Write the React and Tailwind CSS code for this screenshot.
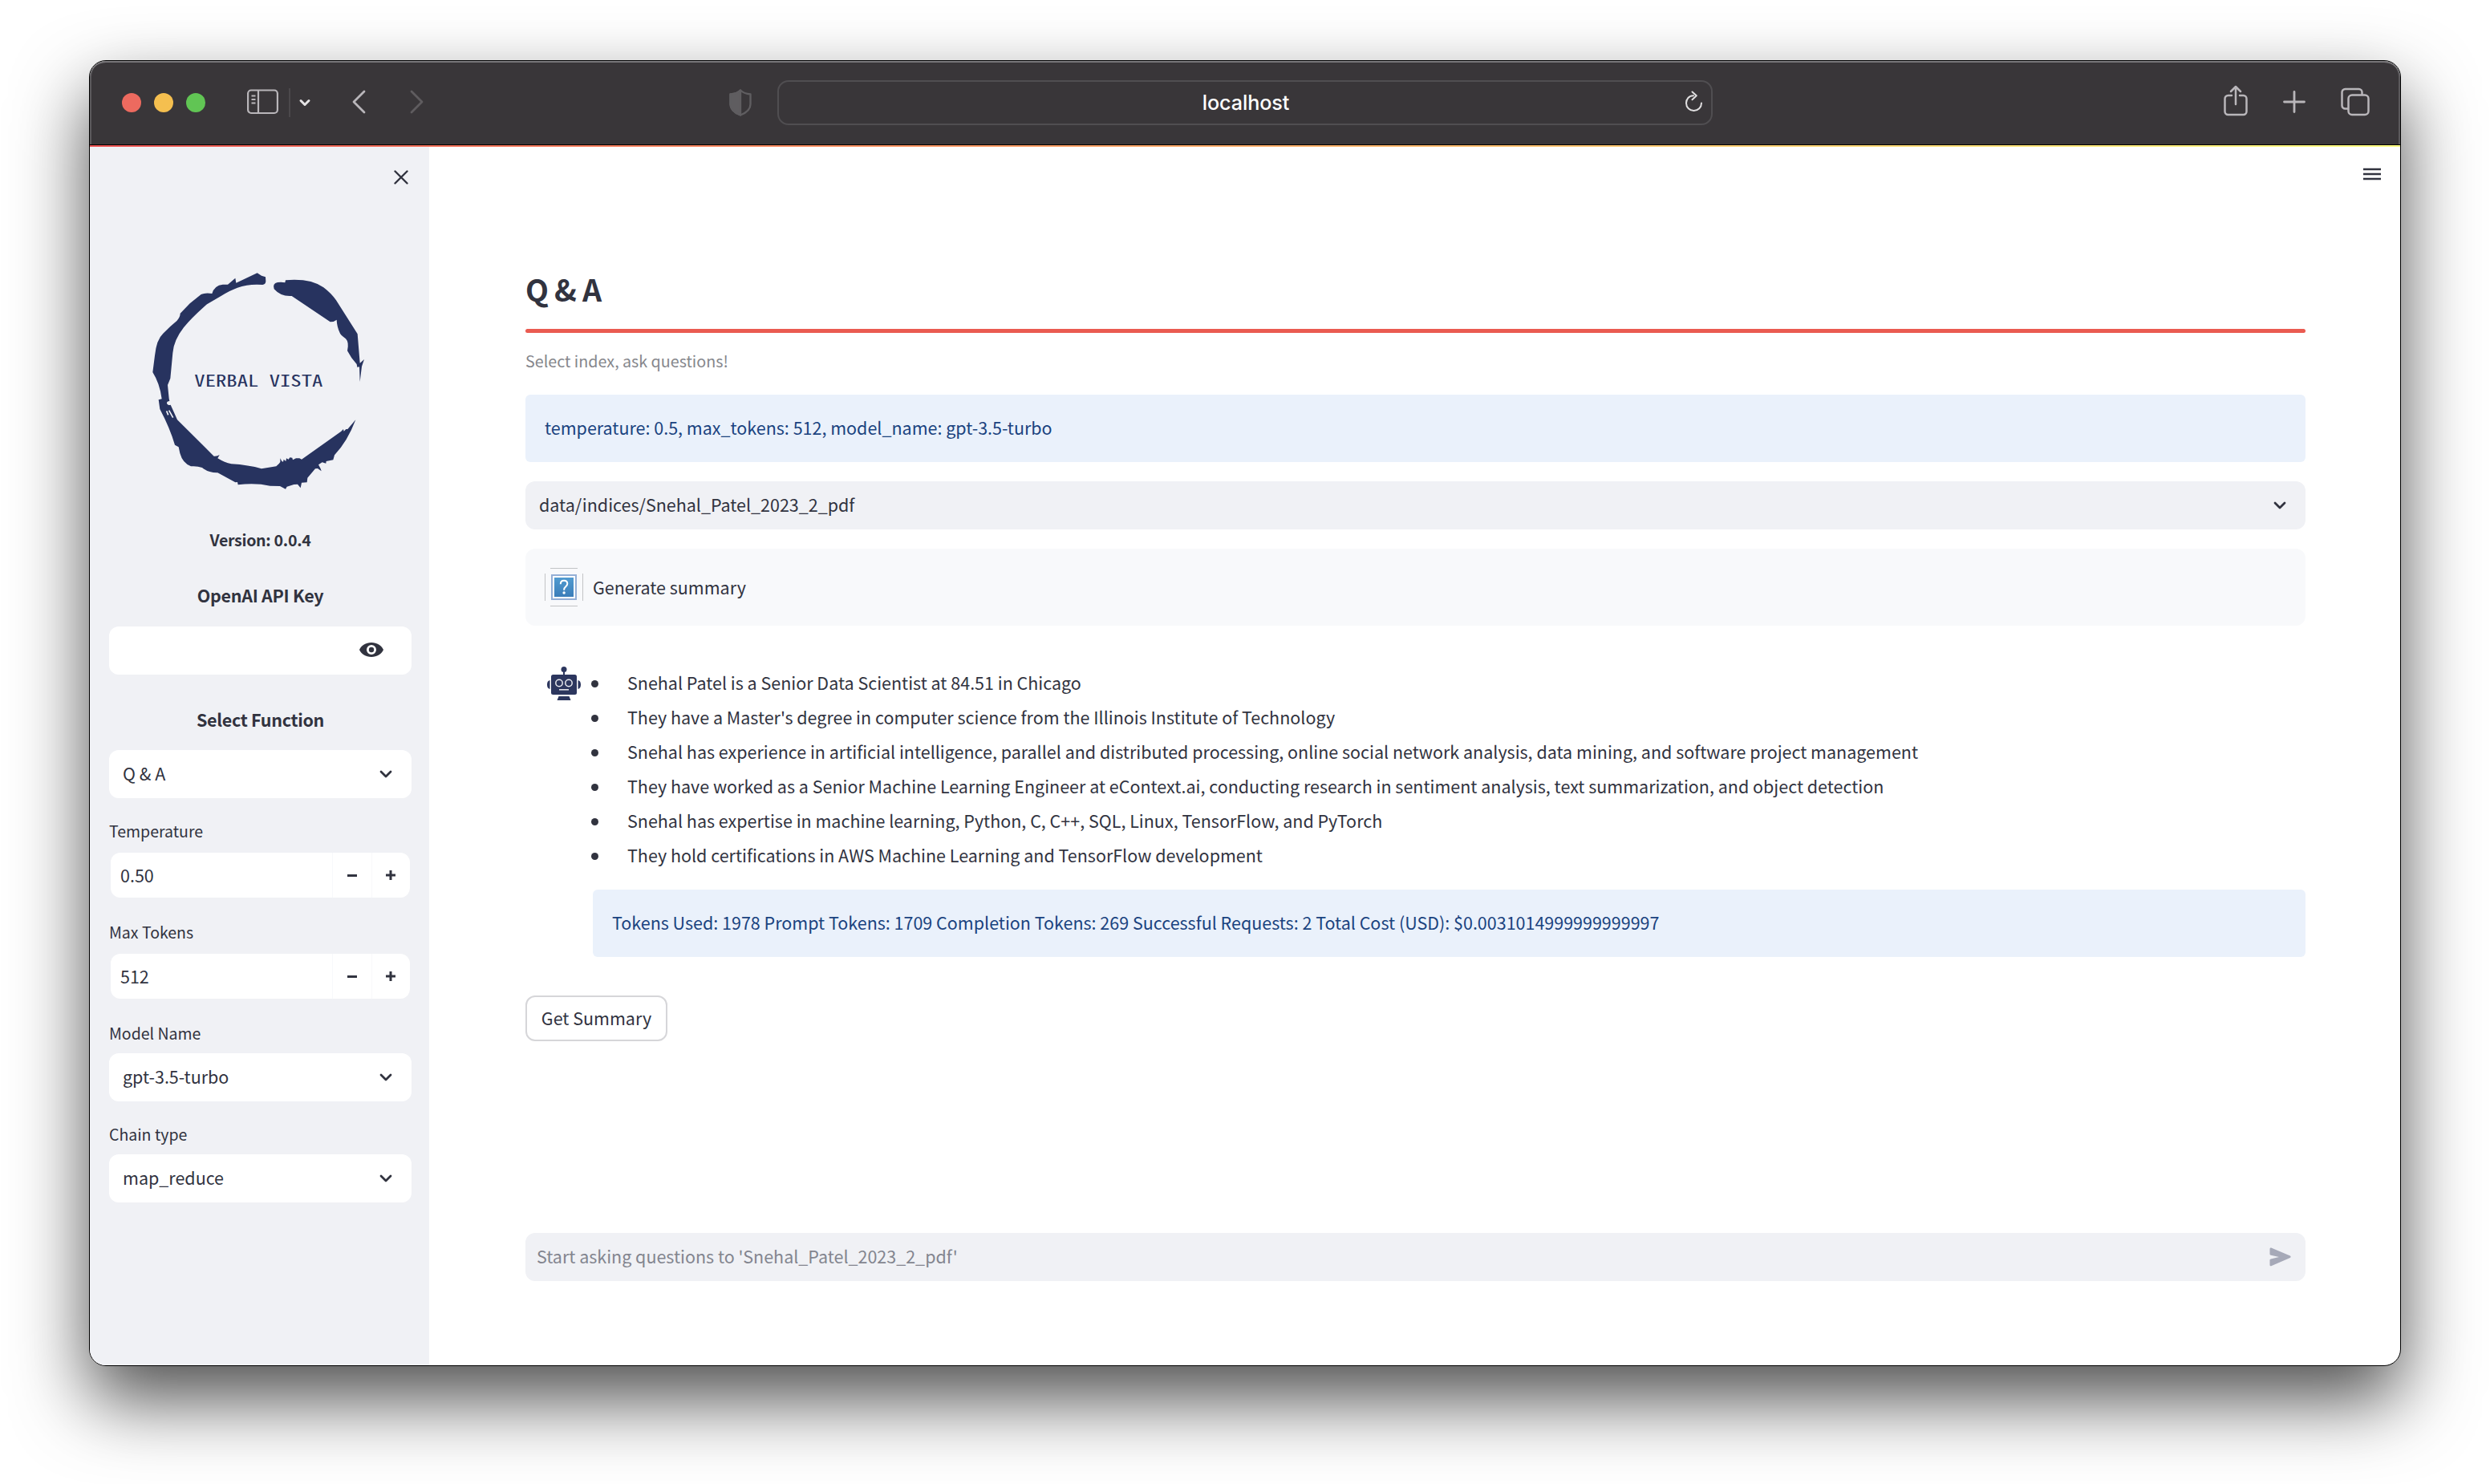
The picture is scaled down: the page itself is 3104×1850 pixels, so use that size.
import React from "react";

const bullets = [
  "Snehal Patel is a Senior Data Scientist at 84.51 in Chicago",
  "They have a Master's degree in computer science from the Illinois Institute of Technology",
  "Snehal has experience in artificial intelligence, parallel and distributed processing, online social network analysis, data mining, and software project management",
  "They have worked as a Senior Machine Learning Engineer at eContext.ai, conducting research in sentiment analysis, text summarization, and object detection",
  "Snehal has expertise in machine learning, Python, C, C++, SQL, Linux, TensorFlow, and PyTorch",
  "They hold certifications in AWS Machine Learning and TensorFlow development",
];

function Chevron({ className }) {
  return (
    <svg className={className} width="16" height="10" viewBox="0 0 16 10" fill="none" stroke="currentColor" strokeWidth="2.8" strokeLinecap="round" strokeLinejoin="round">
      <path d="M2 2l6 6 6-6" />
    </svg>
  );
}

function Toolbar() {
  return (
    <header className="flex h-[104px] shrink-0 items-center text-[#b9b6ba] bg-[#393639] shadow-[inset_0_2px_0_#79777a,inset_2px_0_0_#5c5a5d,inset_-2px_0_0_#5c5a5d] rounded-t-[20px]">
      <div className="ml-10 flex gap-4">
        <span className="size-6 rounded-full bg-[#ed6a5f]" />
        <span className="size-6 rounded-full bg-[#f5bf4f]" />
        <span className="size-6 rounded-full bg-[#61c554]" />
      </div>
      <svg className="ml-[52px]" width="39" height="48" fill="none" stroke="currentColor" strokeWidth="2.2">
        <rect x="1.100" y="8.500" width="36.800" height="28.500" rx="4" />
        <path d="M14 9v28M5.500 15.500h5M5.500 20h5M5.500 24.500h5" />
      </svg>
      <span className="ml-[13px] h-9 w-0.5 bg-[#4b484b]" />
      <svg className="ml-[10px] text-[#e4e3e4]" width="16" height="48" fill="none" stroke="currentColor" strokeWidth="3" strokeLinecap="round" strokeLinejoin="round">
        <path d="M3 21.500l5 5 5-5" />
      </svg>
      <svg className="ml-[50px]" width="20" height="48" fill="none" stroke="currentColor" strokeWidth="2.8" strokeLinecap="round" strokeLinejoin="round">
        <path d="M16 10L3 23l13 13" />
      </svg>
      <svg className="ml-[52px] text-[#5f5c5f]" width="20" height="48" fill="none" stroke="currentColor" strokeWidth="2.8" strokeLinecap="round" strokeLinejoin="round">
        <path d="M3 10l13 13L3 36" />
      </svg>
      <svg className="ml-[379px] text-[#5f5d60]" width="28" height="48" fill="none" stroke="currentColor" strokeWidth="2.400" strokeLinejoin="round">
        <path d="M14 8.500c3 3 7 4.500 12.500 5V26c0 6-5 10.500-12.500 13.500C6.500 36.500 1.500 32 1.500 26V13.500C7 13 11 11.500 14 8.500z" />
        <path d="M14 8.500V39.500C6.500 36.500 1.500 32 1.500 26V13.500C7 13 11 11.500 14 8.500z" fill="currentColor" />
      </svg>
      <div className="ml-8 flex h-14 w-[1166px] items-center justify-end rounded-[14px] border-2 border-[#504e51] pr-[9px]">
        <span className="flex-1 pl-[35px] text-center font-['Inter',sans-serif] text-[25.2px] font-medium tracking-[-0.1px] text-white">localhost</span>
        <svg className="text-[#e0dfe0]" width="24" height="48" fill="none" stroke="currentColor" strokeWidth="2" strokeLinecap="round" strokeLinejoin="round">
          <path d="M11 15.200C5.500 15.200 2 19.500 2 24.600 2 29.900 6.200 34 11.500 34S21 29.900 21 24.600M9.500 10.500l5.300 4.800-5.300 5" />
        </svg>
      </div>
      <svg className="ml-[637px]" width="30" height="48" fill="none" stroke="currentColor" strokeWidth="2.500" strokeLinecap="round" strokeLinejoin="round">
        <path d="M10 15H5.500A4 4 0 0 0 1.500 19v16a4 4 0 0 0 4 4h19a4 4 0 0 0 4-4V19a4 4 0 0 0-4-4H20M15 26V4.500M9 10l6-6 6 6" />
      </svg>
      <svg className="ml-11" width="28" height="48" fill="none" stroke="currentColor" strokeWidth="2.800" strokeLinecap="round">
        <path d="M14 10.500v25M1.500 23h25" />
      </svg>
      <svg className="ml-11" width="36" height="48" fill="none" stroke="currentColor" strokeWidth="2.500">
        <rect x="9.500" y="14.500" width="25" height="24.500" rx="4.500" />
        <path d="M9.500 31.500H5.500a4 4 0 0 1-4-4V11a4 4 0 0 1 4-4h17a4 4 0 0 1 4 4v3.500" />
      </svg>
    </header>
  );
}

function Logo() {
  return (
    <svg className="ml-12 mt-[96px] shrink-0" width="330" height="310" viewBox="0 0 990 930" fill="#27335f">
      <path d="M482 61L498 71 513 76 514 92Q513 103 502 105Q450 101 408 116Q380 126 348 146L294 178Q235 230 207 265Q170 312 166 360L157 455 147 480 152 530 154 540Q143 540 144 549Q148 558 158 554L183 610 320 746Q333 747 341 741L334 754Q360 770 385 775Q450 779 498 793L553 784Q564 775 568 768L568 754 574 765 579 767 581 758 589 765 591 754 599 758 604 751 613 752 615 760 627 754 640 754 648 758 795 654 804 645 806 653 814 645 820 645 850 610Q820 690 771 742L766 760 740 765 739 773 725 769 711 778 719 793 722 802 708 792 699 793 670 827 668 844 648 845 644 865 633 851 619 852 593 860 588 869 567 858 530 857Q475 845 410 853L408 843 400 844 334 808Q300 809 276 789 257 782 234 784 203 772 193 735L188 712 174 704Q155 640 118 570L113 535 125 532Q118 475 91 432L99 370Q105 310 130 287Q155 261 182 239Q194 225 194 212L230 175 272 141Q288 134 313 138Q322 107 353 104L372 104 400 80 403 98Z" />
      <path d="M143 577l6 15M152 575l15 27" stroke="#f0f1f5" strokeWidth="5" />
      <path d="M558 96Q575 94 586 97L588 88Q680 80 730 115 760 138 777 163L857 289 866 398 882 384 873 410 866 468 864 412 856 413 854 402Q833 380 819 352 826 320 813 307 791 290 791 285 780 262 779 236L767 243 755 244 611 147Q570 150 545 121 538 100 558 96Z" />
      <text x="247" y="487" fontFamily="'Noto Sans Mono CJK SC','Noto Sans CJK SC',monospace" fontSize="60" fontWeight="500" textLength="480" lengthAdjust="spacingAndGlyphs">VERBAL VISTA</text>
    </svg>
  );
}

function Select({ value }) {
  return (
    <div className="flex h-[60px] items-center justify-between rounded-xl bg-white pl-[17px] pr-[24px]">
      <span className="pb-0.5">{value}</span>
      <Chevron />
    </div>
  );
}

function NumberInput({ value }) {
  return (
    <div className="mx-0.5 flex h-14 rounded-xl bg-white">
      <span className="flex flex-1 items-center pl-3 pb-px">{value}</span>
      <span className="flex w-[49px] items-center justify-center border-l border-[#f8f9fb]">
        <span className="h-[3px] w-3 bg-[#31333f]" />
      </span>
      <span className="flex w-12 items-center justify-center border-l border-[#f8f9fb] pr-0.5">
        <svg width="12" height="12" stroke="currentColor" strokeWidth="3"><path d="M6 0v12M0 6h12" /></svg>
      </span>
    </div>
  );
}

function Label({ children }) {
  return <div className="h-8 text-[19.5px] leading-[28px]">{children}</div>;
}

function Sidebar() {
  return (
    <aside className="flex w-[423px] flex-col bg-[#f0f1f5]">
      <div className="mt-[29px] flex justify-end pr-[26px]">
        <svg width="18" height="18" fill="none" stroke="currentColor" strokeWidth="2.400" strokeLinecap="round"><path d="M1.500 1.500l15 15M16.500 1.500l-15 15" /></svg>
      </div>
      <div className="-mt-[6px] flex flex-col"><Logo /></div>
      <div className="ml-6 mr-[22px] flex flex-col text-[21.49px]">
        <div className="mt-[26px] h-9 text-center text-[19.6px] font-semibold leading-[34px] tracking-[-0.3px]">Version: 0.0.4</div>
        <div className="mt-[34px] h-9 text-center font-semibold leading-[32px] tracking-[-0.28px]">OpenAI API Key</div>
        <div className="mt-[19px] flex h-[60px] items-center justify-end rounded-xl bg-white pr-[35px]">
          <svg className="-mt-0.5" width="30" height="18" viewBox="0 0 30 18">
            <path fill="currentColor" fillRule="evenodd" d="M15 0C8 0 2.500 3.500 0 9c2.500 5.500 8 9 15 9s12.500-3.500 15-9C27.500 3.500 22 0 15 0zm0 15a6 6 0 1 1 0-12 6 6 0 0 1 0 12z" />
            <circle cx="15" cy="9" r="3.200" fill="currentColor" />
          </svg>
        </div>
        <div className="mt-10 h-9 text-center font-semibold leading-[32px] tracking-[-0.3px]">Select Function</div>
        <div className="mt-[18px]"><Select value="Q & A" /></div>
        <div className="mt-[27px]"><Label>Temperature</Label></div>
        <div className="mt-[9px]"><NumberInput value="0.50" /></div>
        <div className="mt-[29px]"><Label>Max Tokens</Label></div>
        <div className="mt-[9px]"><NumberInput value="512" /></div>
        <div className="mt-[29px]"><Label>Model Name</Label></div>
        <div className="mt-[7px]"><Select value="gpt-3.5-turbo" /></div>
        <div className="mt-[27px]"><Label>Chain type</Label></div>
        <div className="mt-[7px]"><Select value="map_reduce" /></div>
      </div>
    </aside>
  );
}

function Info({ children }) {
  return <div className="flex h-[84px] items-center rounded-md bg-[#eaf1fb] px-6 pb-0.5 text-[#1a437f]">{children}</div>;
}

function UserAvatar() {
  return (
    <svg width="48" height="48" fill="none">
      <defs>
        <linearGradient id="tile" x1="0" y1="0" x2="0" y2="1">
          <stop offset="0" stopColor="#519bd0" />
          <stop offset="1" stopColor="#3b7db9" />
        </linearGradient>
      </defs>
      <path d="M7 .5h34M7 47.500h34M.5 7v34M47.500 7v34" stroke="#c2c4c6" />
      <rect x="9" y="9" width="30" height="30" fill="#fff" stroke="#94afd6" strokeWidth="2" />
      <rect x="12" y="12" width="24" height="24" fill="url(#tile)" />
      <path d="M19.800 20.200c0-3 1.800-4.400 4.200-4.400s4.300 1.500 4.300 3.900c0 3.300-4.100 3.600-4.100 7v1" stroke="#fff" strokeWidth="2" />
      <circle cx="24.100" cy="31" r="1.700" fill="#fff" />
    </svg>
  );
}

function BotAvatar() {
  return (
    <svg width="48" height="48" fill="#2c365e">
      <circle cx="24" cy="6.500" r="3.500" />
      <path d="M23 8h2v6h-2z" />
      <rect x="8" y="13" width="32" height="25" rx="2.500" />
      <path d="M6.500 20v11C4 30.500 3 28.500 3 25.500S4 20.500 6.500 20zM41.500 20v11c2.500-.5 3.500-2.500 3.500-5.500s-1-5-3.500-5.500zM17.500 40h13l2 5h-17z" />
      <g fill="none" stroke="#e8e9ee" strokeWidth="1.500">
        <circle cx="18" cy="23.500" r="4.200" />
        <circle cx="30" cy="23.500" r="4.200" />
        <path d="M18 31.800h12" />
      </g>
    </svg>
  );
}

function Main() {
  return (
    <main className="flex flex-1 flex-col">
      <div className="mt-[26px] flex justify-end pr-6">
        <svg width="22" height="16" stroke="currentColor" strokeWidth="2.400"><path d="M0 2h22M0 8h22M0 14h22" /></svg>
      </div>
      <div className="ml-[120px] mr-[118px] flex flex-col">
        <h3 className="mt-[107px] h-[60px] text-[37.6px] font-semibold leading-[56px] tracking-[-0.7px]">Q &amp; A</h3>
        <div className="mt-[18px] h-[5px] rounded-sm bg-[#ea5b51]" />
        <p className="mt-5 h-8 text-[19.7px] leading-[29px] text-[#86878c]">Select index, ask questions!</p>
        <div className="mt-[25px]"><Info>temperature: 0.5, max_tokens: 512, model_name: gpt-3.5-turbo</Info></div>
        <div className="mt-6 flex h-[60px] items-center justify-between rounded-xl bg-[#f0f1f5] pl-[17px] pr-[24px]">
          <span className="pb-0.5">data/indices/Snehal_Patel_2023_2_pdf</span>
          <Chevron />
        </div>
        <div className="mt-6 flex h-24 items-center gap-3 rounded-xl bg-[#f8f9fb] px-6">
          <UserAvatar />
          <span>Generate summary</span>
        </div>
        <div className="mt-12 flex gap-3 pl-6">
          <BotAvatar />
          <div className="flex-1">
            <ul className="pt-[3px]">
              {bullets.map((text) => (
                <li key={text} className="flex h-[43px] items-center whitespace-nowrap">
                  <span className="-ml-[2px] mr-[36px] size-[9px] rounded-full bg-[#31333f]" />
                  <span className="pb-[3px]">{text}</span>
                </li>
              ))}
            </ul>
            <div className="mt-5"><Info>Tokens Used: 1978 Prompt Tokens: 1709 Completion Tokens: 269 Successful Requests: 2 Total Cost (USD): $0.0031014999999999997</Info></div>
          </div>
        </div>
        <button className="mt-12 flex h-[57px] w-[177px] items-center justify-center rounded-xl border-2 border-[#d6d6d9] pb-0.5 whitespace-nowrap">Get Summary</button>
        <div className="mt-[239px] flex h-[60px] items-center justify-between rounded-xl bg-[#f0f1f5] pl-[14px] pr-[18px] text-[#83858f]">
          <span className="pb-0.5">Start asking questions to 'Snehal_Patel_2023_2_pdf'</span>
          <svg width="27" height="24" fill="#a6a9b8">
            <path d="M.5 2.200C.5.800 1.600.3 2.800.8l23 9.800c1.100.5 1.100 2 0 2.500l-23 10C1.600 23.600.5 23 .5 21.700V16c0-.8.500-1.400 1.300-1.500L12 12 1.800 9.700C1 9.500.5 9 .5 8.200z" />
          </svg>
        </div>
      </div>
    </main>
  );
}

export default function App() {
  return (
    <div className="flex h-[1850px] w-[3104px] items-start overflow-hidden bg-white pl-[111px] pt-[75px] font-['Noto_Sans_CJK_SC',sans-serif] text-[21.49px] leading-[30px] text-[#31333f]">
      <div className="flex h-[1628px] w-[2882px] flex-col overflow-hidden rounded-[21px] border border-black bg-white shadow-[0_42px_92px_rgba(0,0,0,0.69)]">
        <Toolbar />
        <div className="h-px shrink-0 bg-black" />
        <div className="h-0.5 shrink-0 bg-linear-to-r from-[#ea5050] to-[#fffd80]" />
        <div className="flex flex-1">
          <Sidebar />
          <Main />
        </div>
      </div>
    </div>
  );
}
